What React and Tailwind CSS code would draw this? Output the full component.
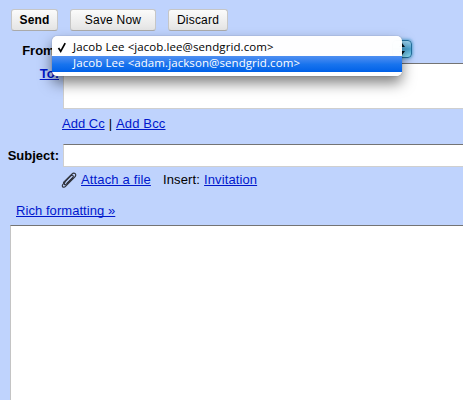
const link = "text-[#0018cc] underline decoration-1 underline-offset-1 [text-decoration-skip-ink:none]";
const button =
  "flex h-[22px] items-center justify-center rounded-[3px] border border-[#c6c6c6] border-b-[#aaa] bg-linear-to-b from-[#fbfbfb] to-[#e4e4e4] text-[12px] tracking-[0.2px]";

function Toolbar() {
  return (
    <div className="flex h-[31px] pt-[9px] pl-[11px]">
      <button className={`${button} w-[47px] font-bold`}>Send</button>
      <button className={`${button} ml-3 w-[86px]`}>Save Now</button>
      <button className={`${button} ml-3 w-[60px]`}>Discard</button>
    </div>
  );
}

function SenderMenu() {
  return (
    <div className="absolute top-[36px] left-[52px] w-[350px] rounded-[5px] bg-white/98 py-1 font-['Open_Sans','Noto_Sans',sans-serif] text-[11.5px] leading-[14px] shadow-[0_0_1px_rgba(0,0,0,0.45),0_7px_14px_rgba(0,0,0,0.5)]">
      <div className="flex h-4 items-start">
        <svg className="mt-[2px] ml-[5px] h-[11px] w-[10px]" viewBox="0 0 10 11" fill="none" stroke="#000">
          <path d="M1.5 6 L3.7 9.3 L8.2 1.2" strokeWidth="1.7" />
        </svg>
        <span className="ml-[6px] tracking-[0.08px] whitespace-nowrap">Jacob Lee &lt;jacob.lee@sendgrid.com&gt;</span>
      </div>
      <div className="flex h-4 items-start bg-linear-to-b from-[#4e8ff1] via-[#1975ee] to-[#0060e8] pl-[21px] text-white">
        <span className="tracking-[0.08px] whitespace-nowrap">Jacob Lee &lt;adam.jackson@sendgrid.com&gt;</span>
      </div>
    </div>
  );
}

function SelectCap() {
  return (
    <div className="absolute top-[40px] left-[392px] h-[18px] w-[20px] rounded-[4px] border border-[#24719e] bg-linear-to-b from-[#9bd0eb] via-[#4ba5d2] to-[#8ce0f8] shadow-[0_0_3px_1px_#62a8d8]">
      <svg className="absolute top-[2px] left-[5px] h-[12px] w-[8px]" viewBox="0 0 8 12">
        <path d="M4 0 L7 4 H1 Z M4 12 L7 8 H1 Z" fill="#001018" />
      </svg>
    </div>
  );
}

function Paperclip() {
  return (
    <svg className="-ml-px h-4 w-4" viewBox="0 0 16 16" fill="none" stroke="#30333c" strokeWidth="1.15" strokeLinecap="round">
      <path d="M4.2 9.5 L9.8 3.9 C11.5 2.3 13.3 4.1 11.7 5.8 L5.4 12.1 C3.9 13.6 2.4 12.1 3.8 10.6" />
      <path d="M11.6 5.7 L6.1 11.2 M3.8 10.4 L2.3 11.9 C-0.1 14.2 2.3 16.5 4.5 14.3 L13.7 5.1 C16.4 2.4 13.3 -0.3 10.8 2.1 L2.5 10.3" />
    </svg>
  );
}

export default function App() {
  return (
    <div className="relative h-[400px] w-[463px] overflow-hidden bg-[#bfd3fd] font-['Liberation_Sans',Arial,sans-serif] text-[13px] leading-4 text-black">
      <Toolbar />
      <div className="flex h-8 pt-3">
        <div className="w-[59px] text-right font-bold">From:</div>
      </div>
      <div className="flex h-[46px]">
        <div className="w-[63px] pt-[3px] pr-[4px] text-right font-bold">
          <span className={link}>To:</span>
        </div>
        <div className="flex-1 border-t border-b border-l border-t-[#747474] border-b-[#cfcfcf] border-l-[#cfcfcf] bg-white" />
      </div>
      <div className="flex h-[35px] pt-[7px] pl-[62px]">
        <span className={link}>Add Cc</span>
        <span className="ml-1">|</span>
        <span className={`${link} ml-1 tracking-[0.15px]`}>Add Bcc</span>
      </div>
      <div className="flex h-[23px]">
        <div className="w-[63px] pt-[4px] pr-[4px] text-right font-bold">Subject:</div>
        <div className="flex-1 border-t border-b border-l border-t-[#747474] border-b-[#cfcfcf] border-l-[#cfcfcf] bg-white" />
      </div>
      <div className="flex h-[36px] pt-[5px] pl-[62px]">
        <Paperclip />
        <span className={`${link} ml-1 tracking-[0.15px]`}>Attach a file</span>
        <span className="ml-3 tracking-[0.15px]">Insert:</span>
        <span className={`${link} ml-1 tracking-[0.1px]`}>Invitation</span>
      </div>
      <div className="h-[22px] pl-4 tracking-[0.06px]">
        <span className={link}>Rich formatting »</span>
      </div>
      <div className="ml-[10px] h-[175px] border-t border-l border-t-[#747474] border-l-[#c4c4c4] bg-white" />
      <SelectCap />
      <SenderMenu />
    </div>
  );
}
